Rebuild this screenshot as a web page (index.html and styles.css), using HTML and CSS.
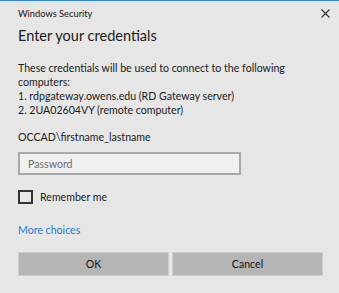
FILE: index.html
```html
<!DOCTYPE html>
<html lang="en">
<head>
  <meta charset="UTF-8" />
  <title>Windows Security</title>
  <link rel="stylesheet" href="styles.css">
</head>
<body>
  <div class="dialog">
    <div class="titlebar">
      <span class="title">Windows Security</span>
      <svg class="close" width="9" height="9" viewBox="0 0 9 9"><path d="M0.5 0.5L8.5 8.5M8.5 0.5L0.5 8.5" stroke="#333" stroke-width="1.1" fill="none"/></svg>
    </div>
    <h1>Enter your credentials</h1>
    <p class="info">These credentials will be used to connect to the following<br>computers:<br>1. rdpgateway.owens.edu (RD Gateway server)<br>2. 2UA02604VY (remote computer)</p>
    <p class="user">OCCAD\firstname_lastname</p>
    <input class="password" type="password" placeholder="Password">
    <label class="remember"><span class="checkbox"></span>Remember me</label>
    <a class="more" href="#">More choices</a>
    <div class="buttons">
      <button class="btn">OK</button>
      <button class="btn">Cancel</button>
    </div>
  </div>
</body>
</html>
```

FILE: styles.css
```css
/* Base */
body { margin: 0; font-family: 'Lato', 'Noto Sans', sans-serif; background-color: #e6e6e6; color: #1a1a1a; }

.dialog {
  height: 293px; box-sizing: border-box; border-top: 1px solid #2b88d8;
  padding: 0 16px 0 18px; display: flex; flex-direction: column;
}

/* Title bar */
.titlebar { display: flex; justify-content: space-between; align-items: center; height: 25px; }
.title { font-size: 9.3px; color: #111; }
.close { margin-right: -7px; }

h1 { margin: 0; font-size: 14.5px; font-weight: 400; line-height: 20px; }

.info { margin: 15px 0 0; font-size: 10.6px; line-height: 14px; white-space: nowrap; }
.user { margin: 13px 0 0; font-size: 10.6px; line-height: 14px; }

/* Password field */
.password {
  margin-top: 8px; width: 223px; height: 23px; box-sizing: border-box;
  border: 2px solid #a8a8a8; background-color: #f0f0f0; padding: 0 8px;
  font-family: inherit; font-size: 10.6px; outline: none;
}
.password::placeholder { color: #6d6d6d; }

.remember { margin-top: 15px; display: flex; align-items: center; gap: 7px; font-size: 10.6px; line-height: 14px; }
.checkbox { width: 15px; height: 14px; box-sizing: border-box; border: 2px solid #333; }

.more { margin-top: 19px; font-size: 10.6px; color: #1b7fd2; text-decoration: none; line-height: 14px; }

/* Buttons */
.buttons { margin-top: 15px; display: flex; gap: 3px; }
.btn {
  width: 151px; height: 24px; box-sizing: border-box; border: 1px solid #cfcfcf;
  background-color: #b5b5b5; font-family: inherit; font-size: 10.6px; color: #111;
}
```
